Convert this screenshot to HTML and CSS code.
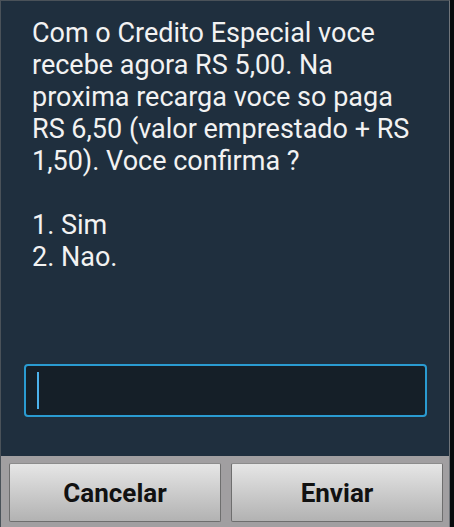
FILE: index.html
```html
<!DOCTYPE html>
<html lang="pt">
<head>
<meta charset="utf-8">
<title>Credito Especial</title>
<link rel="stylesheet" href="styles.css">
</head>
<body>
<div class="dialog">
  <div class="content">
    <p class="message">Com o Credito Especial voce<br>recebe agora RS 5,00. Na<br>proxima recarga voce so paga<br>RS 6,50 (valor emprestado + RS<br>1,50). Voce confirma ?<br><br>1. Sim<br>2. Nao.</p>
    <div class="input"><span class="cursor"></span></div>
  </div>
  <div class="buttons">
    <button class="btn">Cancelar</button>
    <button class="btn">Enviar</button>
  </div>
</div>
</body>
</html>
```
FILE: styles.css
```css
html, body {
  margin: 0;
  padding: 0;
}
body {
  background: #080a0c;
  width: 454px;
  height: 527px;
  overflow: hidden;
  font-family: Roboto, "Noto Sans", sans-serif;
}
.dialog {
  width: 448px;
  height: 526px;
  border-top: 1px solid #4a5259;
  border-left: 1px solid #4a5259;
  border-right: 1px solid #70757a;
  display: flex;
  flex-direction: column;
}
.content {
  background: #1f2f3e;
  height: 455px;
  display: flex;
  flex-direction: column;
}
.message {
  margin: 0;
  padding: 16px 0 0 31px;
  font-size: 27px;
  line-height: 32px;
  color: #f2f2f2;
  white-space: nowrap;
}
.input {
  margin: auto 0 39px 23px;
  width: 399px;
  height: 49px;
  border: 2px solid #2a9bd1;
  border-radius: 4px;
  background: #151f28;
  display: flex;
  align-items: center;
}
.cursor {
  display: block;
  width: 2px;
  height: 37px;
  margin-left: 11px;
  background: #4cb2ec;
}
.buttons {
  flex: 1;
  background: #a19fa1;
  display: grid;
  grid-template-columns: 1fr 1fr;
  gap: 10px;
  padding: 7px 6px 5px 8px;
}
.btn {
  margin: 0;
  border: 1px solid #6e6e6e;
  border-top-color: #8c8c8c;
  border-radius: 2px;
  background: linear-gradient(#e6e6e6, #b2b2b2);
  font-family: Roboto, "Noto Sans", sans-serif;
  font-weight: bold;
  font-size: 26px;
  color: #111111;
  padding: 0;
}
```
